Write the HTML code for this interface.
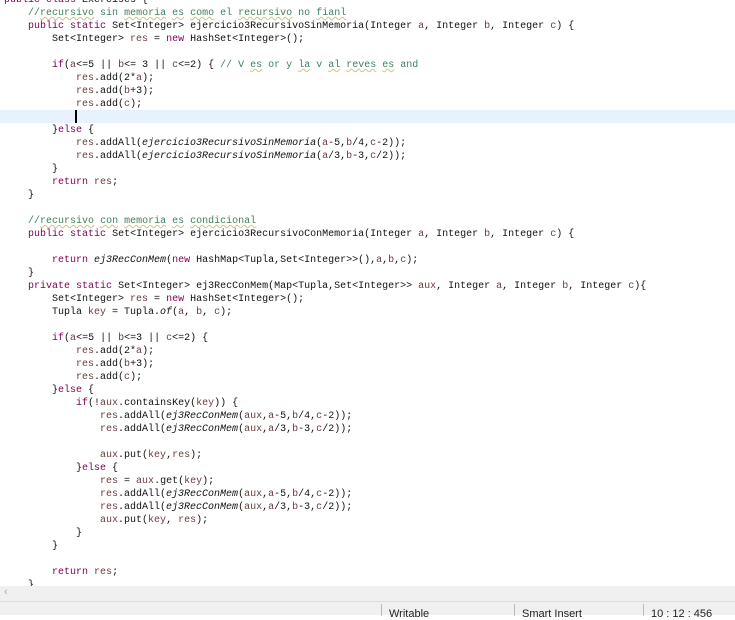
<!DOCTYPE html>
<html><head><meta charset="utf-8"><style>
html,body{margin:0;padding:0;width:735px;height:614px;overflow:hidden;background:#fff;}
#code{position:absolute;left:4px;top:-6px;font-family:"Liberation Mono",monospace;font-size:10px;line-height:13px;white-space:pre;color:#111;}
.k{color:#7f0055}
.c{color:#3f7f5f}
.v{color:#6a3e3e}
.i{font-style:italic}
.u{text-decoration:underline wavy #d8c080;text-decoration-thickness:1px}
#hl{position:absolute;left:0;top:110px;width:735px;height:13px;background:#e8f2fe}
#cur{position:absolute;left:75px;top:110px;width:2px;height:13px;background:#000}
#sb{position:absolute;left:0;top:586px;width:735px;height:15px;background:#f0f0f0;color:#aaa;font:11px "Liberation Sans",sans-serif}
#st{position:absolute;left:0;top:601px;width:735px;height:13px;background:#f0f0f0;border-top:1px solid #dcdcdc;font:11px "Liberation Sans",sans-serif;color:#222}
.sep{position:absolute;top:2px;width:1px;height:12px;background:#bbb}
.t{position:absolute;top:6px}
</style></head><body>
<div id="hl"></div><div id="cur"></div>
<div id="code"><span class="k">public</span> <span class="k">class</span> Exercises {
    <span class="c">//<span class="u">recursivo</span> sin <span class="u">memoria</span> <span class="u">es</span> <span class="u">como</span> el <span class="u">recursivo</span> no <span class="u">fianl</span></span>
    <span class="k">public</span> <span class="k">static</span> Set&lt;Integer&gt; ejercicio3RecursivoSinMemoria(Integer <span class="v">a</span>, Integer <span class="v">b</span>, Integer <span class="v">c</span>) {
        Set&lt;Integer&gt; <span class="v">res</span> = <span class="k">new</span> HashSet&lt;Integer&gt;();

        <span class="k">if</span>(<span class="v">a</span>&lt;=5 || <span class="v">b</span>&lt;= 3 || <span class="v">c</span>&lt;=2) { <span class="c">// V <span class="u">es</span> or y <span class="u">la</span> v <span class="u">al</span> <span class="u">reves</span> <span class="u">es</span> and</span>
            <span class="v">res</span>.add(2*<span class="v">a</span>);
            <span class="v">res</span>.add(<span class="v">b</span>+3);
            <span class="v">res</span>.add(<span class="v">c</span>);

        }<span class="k">else</span> {
            <span class="v">res</span>.addAll(<span class="i">ejercicio3RecursivoSinMemoria</span>(<span class="v">a</span>-5,<span class="v">b</span>/4,<span class="v">c</span>-2));
            <span class="v">res</span>.addAll(<span class="i">ejercicio3RecursivoSinMemoria</span>(<span class="v">a</span>/3,<span class="v">b</span>-3,<span class="v">c</span>/2));
        }
        <span class="k">return</span> <span class="v">res</span>;
    }

    <span class="c">//<span class="u">recursivo</span> <span class="u">con</span> <span class="u">memoria</span> <span class="u">es</span> <span class="u">condicional</span></span>
    <span class="k">public</span> <span class="k">static</span> Set&lt;Integer&gt; ejercicio3RecursivoConMemoria(Integer <span class="v">a</span>, Integer <span class="v">b</span>, Integer <span class="v">c</span>) {

        <span class="k">return</span> <span class="i">ej3RecConMem</span>(<span class="k">new</span> HashMap&lt;Tupla,Set&lt;Integer&gt;&gt;(),<span class="v">a</span>,<span class="v">b</span>,<span class="v">c</span>);
    }
    <span class="k">private</span> <span class="k">static</span> Set&lt;Integer&gt; ej3RecConMem(Map&lt;Tupla,Set&lt;Integer&gt;&gt; <span class="v">aux</span>, Integer <span class="v">a</span>, Integer <span class="v">b</span>, Integer <span class="v">c</span>){
        Set&lt;Integer&gt; <span class="v">res</span> = <span class="k">new</span> HashSet&lt;Integer&gt;();
        Tupla <span class="v">key</span> = Tupla.<span class="i">of</span>(<span class="v">a</span>, <span class="v">b</span>, <span class="v">c</span>);

        <span class="k">if</span>(<span class="v">a</span>&lt;=5 || <span class="v">b</span>&lt;=3 || <span class="v">c</span>&lt;=2) {
            <span class="v">res</span>.add(2*<span class="v">a</span>);
            <span class="v">res</span>.add(<span class="v">b</span>+3);
            <span class="v">res</span>.add(<span class="v">c</span>);
        }<span class="k">else</span> {
            <span class="k">if</span>(!<span class="v">aux</span>.containsKey(<span class="v">key</span>)) {
                <span class="v">res</span>.addAll(<span class="i">ej3RecConMem</span>(<span class="v">aux</span>,<span class="v">a</span>-5,<span class="v">b</span>/4,<span class="v">c</span>-2));
                <span class="v">res</span>.addAll(<span class="i">ej3RecConMem</span>(<span class="v">aux</span>,<span class="v">a</span>/3,<span class="v">b</span>-3,<span class="v">c</span>/2));

                <span class="v">aux</span>.put(<span class="v">key</span>,<span class="v">res</span>);
            }<span class="k">else</span> {
                <span class="v">res</span> = <span class="v">aux</span>.get(<span class="v">key</span>);
                <span class="v">res</span>.addAll(<span class="i">ej3RecConMem</span>(<span class="v">aux</span>,<span class="v">a</span>-5,<span class="v">b</span>/4,<span class="v">c</span>-2));
                <span class="v">res</span>.addAll(<span class="i">ej3RecConMem</span>(<span class="v">aux</span>,<span class="v">a</span>/3,<span class="v">b</span>-3,<span class="v">c</span>/2));
                <span class="v">aux</span>.put(<span class="v">key</span>, <span class="v">res</span>);
            }
        }

        <span class="k">return</span> <span class="v">res</span>;
    }
</div>
<div id="sb"><span style="position:absolute;left:4px;top:0px">&lsaquo;</span></div>
<div id="st">
<div class="sep" style="left:381px"></div><div class="t" style="left:389px">Writable</div>
<div class="sep" style="left:514px"></div><div class="t" style="left:522px">Smart Insert</div>
<div class="sep" style="left:643px"></div><div class="t" style="left:651px">10 : 12 : 456</div>
</div>
</body></html>
